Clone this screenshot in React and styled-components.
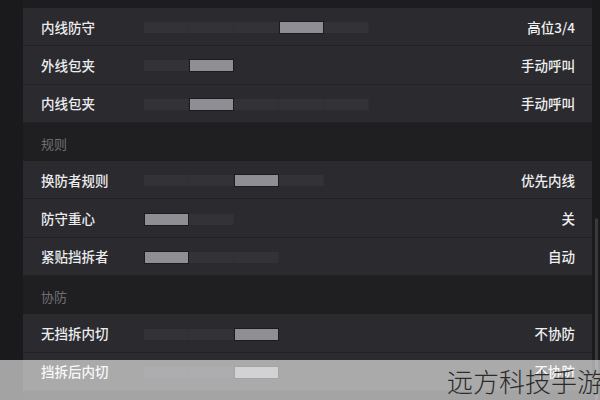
import React from "react";
import styled, { createGlobalStyle } from "styled-components";

const GlobalStyle = createGlobalStyle`
  * { box-sizing: border-box; }
  html, body { margin: 0; padding: 0; background: #1d1d1f; }
  body { font-family: "Noto Sans CJK SC", "Noto Sans", sans-serif; }
`;

const Screen = styled.div`
  position: relative;
  width: 600px;
  height: 400px;
  overflow: hidden;
  display: flex;
  background: #1d1d1f;
`;

const Gutter = styled.div`
  width: 23px;
  background: #1a1a1c;
`;

const Panel = styled.div`
  flex: 1;
  padding-top: 8px;
  display: flex;
  flex-direction: column;
`;

const ScrollTrack = styled.div`
  width: 8px;
  background: #1a1a1c;
  padding: 218px 2px 0 3px;
  display: flex;
  flex-direction: column;
`;

const ScrollThumb = styled.div`
  flex: 1;
  background: #3a3a3d;
  border-radius: 2px;
`;

const Row = styled.div`
  height: 38.3px;
  flex: none;
  background: #2b2b2f;
  border-bottom: 1px solid #222225;
  display: grid;
  grid-template-columns: 103px 1fr auto;
  align-items: center;
  padding: 0 17px 0 18px;
`;

const Label = styled.span`
  color: #ececee;
  font-size: 13.5px;
  font-weight: 500;
  line-height: 18px;
`;

const Value = styled.span`
  color: #f0f0f1;
  font-size: 13.5px;
  font-weight: 500;
  line-height: 18px;
  text-align: right;
`;

const Segments = styled.div`
  display: flex;
  align-items: center;
  padding-top: 2px;
`;

const Segment = styled.div`
  width: 45px;
  height: ${(p) => (p.$active ? "13px" : "11px")};
  background: ${(p) => (p.$active ? "#8f8e94" : "#323237")};
  border: ${(p) => (p.$active ? "1px solid #1c1c1e" : "none")};
  border-right: ${(p) => (p.$active ? "1px solid #1c1c1e" : "1px solid #2e2e33")};
`;

const SectionHeader = styled.div`
  height: 38.3px;
  flex: none;
  display: flex;
  align-items: flex-end;
  padding: 0 18px 8px;
  color: #6f6f72;
  font-size: 13px;
  line-height: 18px;
  background: #1f1f21;
`;

const WatermarkBand = styled.div`
  position: absolute;
  left: 0;
  right: 0;
  bottom: 0;
  height: 40px;
  background: rgba(255, 255, 255, 0.6);
  display: flex;
  align-items: center;
  justify-content: flex-end;
`;

const WatermarkText = styled.span`
  font-family: "Noto Sans CJK SC", sans-serif;
  font-weight: 300;
  font-size: 26px;
  line-height: 30px;
  color: #2b2b2b;
  margin-right: -3px;
  margin-top: 1px;
`;

const sections = [
  {
    title: null,
    rows: [
      { label: "内线防守", count: 5, active: 3, value: "高位3/4" },
      { label: "外线包夹", count: 2, active: 1, value: "手动呼叫" },
      { label: "内线包夹", count: 5, active: 1, value: "手动呼叫" },
    ],
  },
  {
    title: "规则",
    rows: [
      { label: "换防者规则", count: 4, active: 2, value: "优先内线" },
      { label: "防守重心", count: 2, active: 0, value: "关" },
      { label: "紧贴挡拆者", count: 3, active: 0, value: "自动" },
    ],
  },
  {
    title: "协防",
    rows: [
      { label: "无挡拆内切", count: 3, active: 2, value: "不协防" },
      { label: "挡拆后内切", count: 3, active: 2, value: "不协防" },
    ],
  },
];

function SettingRow({ label, count, active, value }) {
  return (
    <Row>
      <Label>{label}</Label>
      <Segments>
        {Array.from({ length: count }).map((_, i) => (
          <Segment key={i} $active={i === active} />
        ))}
      </Segments>
      <Value>{value}</Value>
    </Row>
  );
}

export default function App() {
  return (
    <>
      <GlobalStyle />
      <Screen>
        <Gutter />
        <Panel>
          {sections.map((s, si) => (
            <React.Fragment key={si}>
              {s.title && <SectionHeader>{s.title}</SectionHeader>}
              {s.rows.map((r) => (
                <SettingRow key={r.label} {...r} />
              ))}
            </React.Fragment>
          ))}
        </Panel>
        <ScrollTrack>
          <ScrollThumb />
        </ScrollTrack>
        <WatermarkBand>
          <WatermarkText>远方科技手游</WatermarkText>
        </WatermarkBand>
      </Screen>
    </>
  );
}
